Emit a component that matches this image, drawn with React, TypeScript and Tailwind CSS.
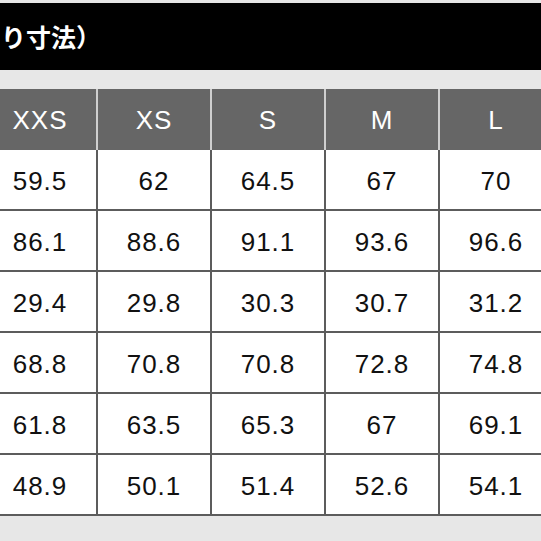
const sizes = ["XXS", "XS", "S", "M", "L"];

const rows = [
  ["59.5", "62", "64.5", "67", "70"],
  ["86.1", "88.6", "91.1", "93.6", "96.6"],
  ["29.4", "29.8", "30.3", "30.7", "31.2"],
  ["68.8", "70.8", "70.8", "72.8", "74.8"],
  ["61.8", "63.5", "65.3", "67", "69.1"],
  ["48.9", "50.1", "51.4", "52.6", "54.1"],
];

const App = () => {
  return (
    <div className="w-[541px] h-[541px] overflow-hidden bg-[#e7e7e7] pt-[3px] font-['Liberation_Sans',sans-serif]">
      <div className="h-[67px] bg-black flex items-center">
        <span className="text-white text-[25px] font-bold ml-[1px] font-['Noto_Sans_CJK_JP',sans-serif] leading-none">
          り寸法）
        </span>
      </div>

      <div className="mt-[19px] ml-[-16px] w-[600px]">
        <div className="flex">
          {sizes.map((s) => (
            <div
              key={s}
              className="w-[114px] h-[61px] shrink-0 bg-[#666666] border-r-2 border-[#cfcfcf] flex items-center justify-center pt-[1px] text-white text-[26px] tracking-[1px]"
            >
              {s}
            </div>
          ))}
        </div>
        {rows.map((r, i) => (
          <div key={i} className="flex">
            {r.map((v, j) => (
              <div
                key={j}
                className="w-[114px] h-[61px] shrink-0 bg-white border-r-2 border-b-2 border-[#5c5c5c] flex items-center justify-center pt-[3px] text-[#111] text-[26px] tracking-[1px]"
              >
                {v}
              </div>
            ))}
          </div>
        ))}
      </div>
    </div>
  );
};

export default App;
